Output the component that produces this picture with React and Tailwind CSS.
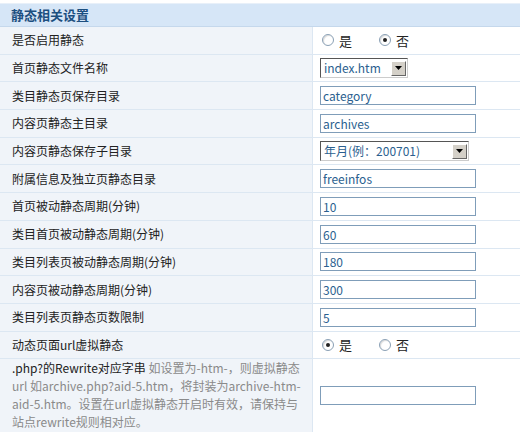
import React from 'react';

const font = { fontFamily: '"Noto Sans CJK SC", "Liberation Sans", sans-serif' };

const Radio = ({ checked, label }) => (
  <span className="inline-flex items-center gap-[5px]">
    <span className="w-[12px] h-[12px] rounded-full border border-[#8aa0b5] bg-white flex items-center justify-center shadow-[inset_1px_1px_1px_rgba(0,0,0,0.15)]">
      {checked ? <span className="w-[4px] h-[4px] rounded-full bg-[#222]" /> : null}
    </span>
    <span className="text-[13px] text-[#222]">{label}</span>
  </span>
);

const TextBox = ({ value }) => (
  <div className="w-[156px] h-[19px] border border-[#7f9db9] bg-white px-[2px] text-[12px] leading-[17px] text-[#2b5f8f]">
    {value}
  </div>
);

const Select = ({ value, w }) => (
  <div
    className={`${w} h-[20px] border border-t-[#555] border-l-[#555] border-b-[#ccc] border-r-[#ccc] bg-white flex items-center justify-between pl-[3px] pr-[1px]`}
  >
    <span className="text-[12px] text-[#2b5f8f]">{value}</span>
    <span className="w-[15px] h-[15px] bg-[#d4d0c8] border border-t-white border-l-white border-b-[#666] border-r-[#666] flex items-center justify-center">
      <svg width="7" height="4" viewBox="0 0 7 4">
        <path d="M0 0h7L3.5 4z" fill="#000" />
      </svg>
    </span>
  </div>
);

const rows = [
  { label: '是否启用静态', el: (
    <div className="flex gap-[27px] pl-[2px]"><Radio label="是" /><Radio checked label="否" /></div>
  ) },
  { label: '首页静态文件名称', el: <Select value="index.htm" w="w-[88px]" /> },
  { label: '类目静态页保存目录', el: <TextBox value="category" /> },
  { label: '内容页静态主目录', el: <TextBox value="archives" /> },
  { label: '内容页静态保存子目录', el: <Select value="年月(例：200701)" w="w-[149px]" /> },
  { label: '附属信息及独立页静态目录', el: <TextBox value="freeinfos" /> },
  { label: '首页被动静态周期(分钟)', el: <TextBox value="10" /> },
  { label: '类目首页被动静态周期(分钟)', el: <TextBox value="60" /> },
  { label: '类目列表页被动静态周期(分钟)', el: <TextBox value="180" /> },
  { label: '内容页被动静态周期(分钟)', el: <TextBox value="300" /> },
  { label: '类目列表页静态页数限制', el: <TextBox value="5" /> },
  { label: '动态页面url虚拟静态', el: (
    <div className="flex gap-[27px] pl-[2px]"><Radio checked label="是" /><Radio label="否" /></div>
  ) },
];

export default function App() {
  return (
    <div className="w-[520px] h-[432px] bg-white overflow-hidden" style={font}>
      <div className="h-[3px]" />
      <div className="h-[24px] bg-[#d6e6f7] border-t border-[#e8f0f9] border-b border-b-[#c5d8ec] flex items-center pl-[11px]">
        <span className="text-[13px] font-bold text-[#1c4f80]">静态相关设置</span>
      </div>
      {rows.map((r) => (
        <div key={r.label} className="flex h-[27.7px] border-b border-[#dce7f2]">
          <div className="w-[313px] shrink-0 bg-[#f0f4f9] border-r border-[#dce7f2] flex items-center pl-[12px] text-[12px] text-[#222]">
            {r.label}
          </div>
          <div className="flex-1 flex items-center pl-[7px]">{r.el}</div>
        </div>
      ))}
      <div className="flex h-[74px] border-b border-[#dce7f2]">
        <div className="w-[313px] shrink-0 bg-[#f0f4f9] border-r border-[#dce7f2] pl-[12px] pr-[6px] text-[12px] leading-[18px] text-[#8a8a8a]">
          <span className="text-[#222]">.php?的Rewrite对应字串</span> 如设置为-htm-，则虚拟静态url 如archive.php?aid-5.htm，将封装为archive-htm-aid-5.htm。设置在url虚拟静态开启时有效，请保持与站点rewrite规则相对应。
        </div>
        <div className="flex-1 flex items-center pl-[7px]"><TextBox value="" /></div>
      </div>
    </div>
  );
}
